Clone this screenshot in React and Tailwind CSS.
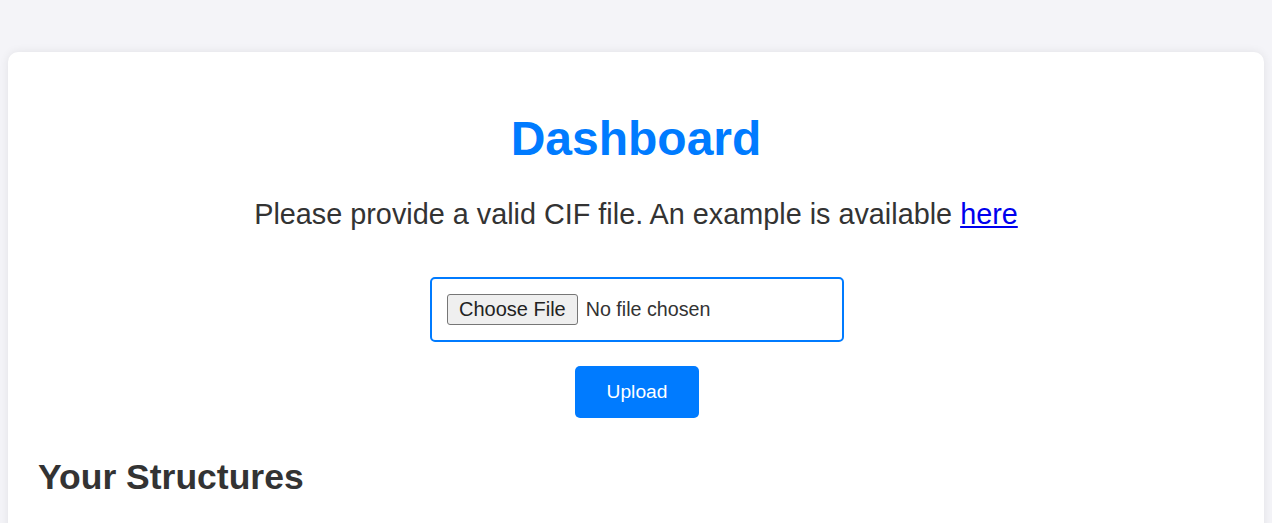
export default function App() {
  return (
    <div
      className="min-h-[523px] bg-[#f4f4f8] pt-[52px] px-2 text-[#333]"
      style={{ fontFamily: '"Liberation Sans", Arial, sans-serif' }}
    >
      <div className="bg-white rounded-[10px] shadow-[0_0_10px_rgba(0,0,0,0.08)] px-[30px] pt-[30px] pb-[40px] min-h-[600px]">
        <h1 className="mt-[29px] text-center text-[48px] leading-[55px] font-bold text-[#007bff]">
          Dashboard
        </h1>
        <p className="mt-[32px] text-center text-[28.8px] leading-[33px]">
          Please provide a valid CIF file. An example is available{" "}
          <a href="#" className="text-[#0000ee] underline">
            here
          </a>
        </p>
        <div className="mt-[46px] flex justify-center">
          <input
            type="file"
            className="ml-[2px] w-[414px] box-border p-[15px] border-2 border-[#007bff] rounded-[5px] text-[19.7px] leading-[31px] text-[#333] file:mr-2 file:px-[11px] file:py-[4px] file:leading-[21px] file:text-[20px] file:bg-[#efefef] file:border file:border-solid file:border-[#767676] file:rounded-[3px] file:text-[#222]"
          />
        </div>
        <div className="mt-[24px] flex justify-center">
          <button className="ml-[2px] w-[124px] h-[52px] bg-[#007bff] text-white text-[19.2px] rounded-[5px]">
            Upload
          </button>
        </div>
        <h2 className="mt-[39px] text-[35.5px] leading-[41px] font-bold text-[#333]">
          Your Structures
        </h2>
      </div>
    </div>
  );
}
